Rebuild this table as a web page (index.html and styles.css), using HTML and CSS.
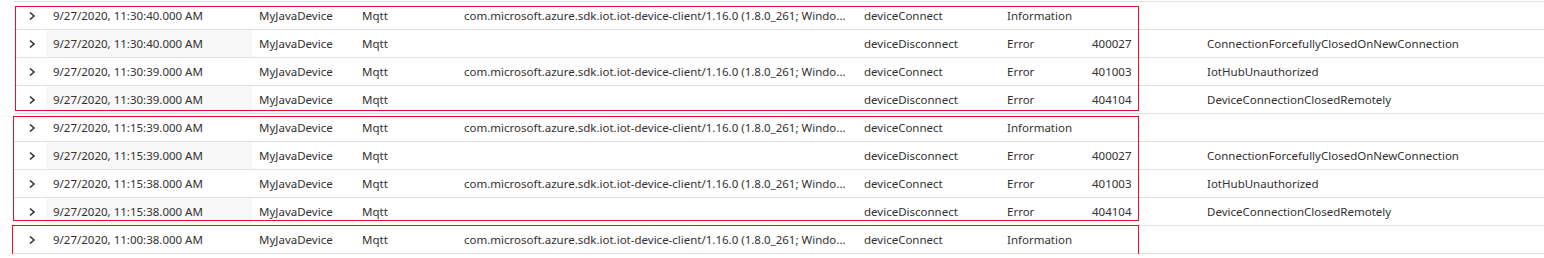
FILE: index.html
```html
<!DOCTYPE html>
<html lang="en">
<head>
  <meta charset="UTF-8">
  <title>Connection events</title>
  <link rel="stylesheet" href="styles.css">
</head>
<body>
  <div class="results">

    <div class="group">
      <span class="mark mark-a"></span>
      <div class="row">
        <div class="cell expand"><svg width="8" height="10" viewBox="0 0 8 10"><polyline points="2,1.5 6,5 2,8.5" /></svg></div>
        <div class="cell time">9/27/2020, 11:30:40.000 AM</div>
        <div class="cell">MyJavaDevice</div>
        <div class="cell">Mqtt</div>
        <div class="cell sdk">com.microsoft.azure.sdk.iot.iot-device-client/1.16.0 (1.8.0_261; Windo...</div>
        <div class="cell">deviceConnect</div>
        <div class="cell">Information</div>
        <div class="cell"></div>
        <div class="cell"></div>
      </div>
      <div class="row">
        <div class="cell expand"><svg width="8" height="10" viewBox="0 0 8 10"><polyline points="2,1.5 6,5 2,8.5" /></svg></div>
        <div class="cell time">9/27/2020, 11:30:40.000 AM</div>
        <div class="cell">MyJavaDevice</div>
        <div class="cell">Mqtt</div>
        <div class="cell sdk"></div>
        <div class="cell">deviceDisconnect</div>
        <div class="cell">Error</div>
        <div class="cell">400027</div>
        <div class="cell">ConnectionForcefullyClosedOnNewConnection</div>
      </div>
      <div class="row">
        <div class="cell expand"><svg width="8" height="10" viewBox="0 0 8 10"><polyline points="2,1.5 6,5 2,8.5" /></svg></div>
        <div class="cell time">9/27/2020, 11:30:39.000 AM</div>
        <div class="cell">MyJavaDevice</div>
        <div class="cell">Mqtt</div>
        <div class="cell sdk">com.microsoft.azure.sdk.iot.iot-device-client/1.16.0 (1.8.0_261; Windo...</div>
        <div class="cell">deviceConnect</div>
        <div class="cell">Error</div>
        <div class="cell">401003</div>
        <div class="cell">IotHubUnauthorized</div>
      </div>
      <div class="row">
        <div class="cell expand"><svg width="8" height="10" viewBox="0 0 8 10"><polyline points="2,1.5 6,5 2,8.5" /></svg></div>
        <div class="cell time">9/27/2020, 11:30:39.000 AM</div>
        <div class="cell">MyJavaDevice</div>
        <div class="cell">Mqtt</div>
        <div class="cell sdk"></div>
        <div class="cell">deviceDisconnect</div>
        <div class="cell">Error</div>
        <div class="cell">404104</div>
        <div class="cell">DeviceConnectionClosedRemotely</div>
      </div>
    </div>

    <div class="group">
      <span class="mark mark-b"></span>
      <div class="row">
        <div class="cell expand"><svg width="8" height="10" viewBox="0 0 8 10"><polyline points="2,1.5 6,5 2,8.5" /></svg></div>
        <div class="cell time">9/27/2020, 11:15:39.000 AM</div>
        <div class="cell">MyJavaDevice</div>
        <div class="cell">Mqtt</div>
        <div class="cell sdk">com.microsoft.azure.sdk.iot.iot-device-client/1.16.0 (1.8.0_261; Windo...</div>
        <div class="cell">deviceConnect</div>
        <div class="cell">Information</div>
        <div class="cell"></div>
        <div class="cell"></div>
      </div>
      <div class="row">
        <div class="cell expand"><svg width="8" height="10" viewBox="0 0 8 10"><polyline points="2,1.5 6,5 2,8.5" /></svg></div>
        <div class="cell time">9/27/2020, 11:15:39.000 AM</div>
        <div class="cell">MyJavaDevice</div>
        <div class="cell">Mqtt</div>
        <div class="cell sdk"></div>
        <div class="cell">deviceDisconnect</div>
        <div class="cell">Error</div>
        <div class="cell">400027</div>
        <div class="cell">ConnectionForcefullyClosedOnNewConnection</div>
      </div>
      <div class="row">
        <div class="cell expand"><svg width="8" height="10" viewBox="0 0 8 10"><polyline points="2,1.5 6,5 2,8.5" /></svg></div>
        <div class="cell time">9/27/2020, 11:15:38.000 AM</div>
        <div class="cell">MyJavaDevice</div>
        <div class="cell">Mqtt</div>
        <div class="cell sdk">com.microsoft.azure.sdk.iot.iot-device-client/1.16.0 (1.8.0_261; Windo...</div>
        <div class="cell">deviceConnect</div>
        <div class="cell">Error</div>
        <div class="cell">401003</div>
        <div class="cell">IotHubUnauthorized</div>
      </div>
      <div class="row">
        <div class="cell expand"><svg width="8" height="10" viewBox="0 0 8 10"><polyline points="2,1.5 6,5 2,8.5" /></svg></div>
        <div class="cell time">9/27/2020, 11:15:38.000 AM</div>
        <div class="cell">MyJavaDevice</div>
        <div class="cell">Mqtt</div>
        <div class="cell sdk"></div>
        <div class="cell">deviceDisconnect</div>
        <div class="cell">Error</div>
        <div class="cell">404104</div>
        <div class="cell">DeviceConnectionClosedRemotely</div>
      </div>
    </div>

    <div class="group">
      <span class="mark mark-c"></span>
      <div class="row">
        <div class="cell expand"><svg width="8" height="10" viewBox="0 0 8 10"><polyline points="2,1.5 6,5 2,8.5" /></svg></div>
        <div class="cell time">9/27/2020, 11:00:38.000 AM</div>
        <div class="cell">MyJavaDevice</div>
        <div class="cell">Mqtt</div>
        <div class="cell sdk">com.microsoft.azure.sdk.iot.iot-device-client/1.16.0 (1.8.0_261; Windo...</div>
        <div class="cell">deviceConnect</div>
        <div class="cell">Information</div>
        <div class="cell"></div>
        <div class="cell"></div>
      </div>
    </div>

  </div>
</body>
</html>
```

FILE: styles.css
```css
body {
  margin: 0;
  background-color: #ffffff;
  font-family: "Noto Sans", "Open Sans", sans-serif;
  font-size: 11.5px;
  color: #323130;
}
.results {
  margin: 1px 0 0 14px;
  border-top: 1px solid #e1dfdd;
}
.group {
  position: relative;
}
.row {
  display: grid;
  grid-template-columns: 32px 206px 103px 102px 400px 143px 85px 115px 1fr;
  height: 27px;
  border-bottom: 1px solid #e1dfdd;
}
.cell {
  display: flex;
  align-items: center;
  padding-left: 7px;
  white-space: nowrap;
  overflow: hidden;
}
.cell.sdk {
  text-overflow: ellipsis;
}
.expand {
  padding-left: 14px;
}
.expand svg polyline {
  fill: none;
  stroke: #323130;
  stroke-width: 1.6;
}
.row:nth-child(odd) .time {
  background-color: #f8f8f8;
}
.mark {
  position: absolute;
  border: 1px solid #e81123;
  pointer-events: none;
}
.mark-a {
  top: 4px;
  left: 1px;
  width: 1122px;
  height: 103px;
}
.mark-b {
  top: 2px;
  left: -1px;
  width: 1124px;
  height: 103px;
}
.mark-c {
  top: -1px;
  left: -2px;
  width: 1125px;
  height: 30px;
}
```
